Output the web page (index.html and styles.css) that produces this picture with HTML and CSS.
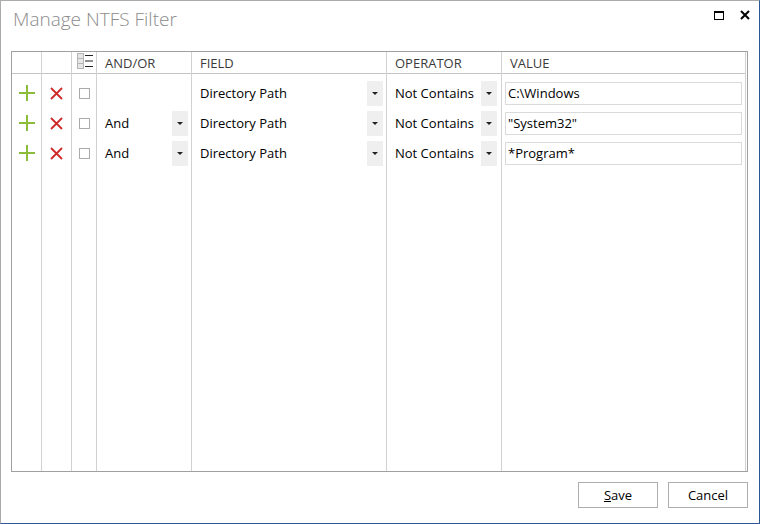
FILE: index.html
```html
<!DOCTYPE html>
<html lang="en">
<head>
	<meta charset="UTF-8">
	<title>Manage NTFS Filter</title>
	<link rel="stylesheet" href="styles.css">
</head>
<body>
	<div class="window">
		<div class="titlebar">
			<span class="title">Manage NTFS Filter</span>
			<div class="controls">
				<span class="ctl max"></span>
				<svg class="ctl" width="10" height="10" viewBox="0 0 10 10"><path d="M1 1 L9 9 M9 1 L1 9" stroke="#000" stroke-width="2"/></svg>
			</div>
		</div>

		<div class="grid">
			<!-- add -->
			<div class="col c-add">
				<div class="head"></div>
				<div class="cell"><svg width="18" height="18" viewBox="0 0 18 18"><path d="M9 1 V17 M1 9 H17" stroke="#8cbd3a" stroke-width="2"/></svg></div>
				<div class="cell"><svg width="18" height="18" viewBox="0 0 18 18"><path d="M9 1 V17 M1 9 H17" stroke="#8cbd3a" stroke-width="2"/></svg></div>
				<div class="cell"><svg width="18" height="18" viewBox="0 0 18 18"><path d="M9 1 V17 M1 9 H17" stroke="#8cbd3a" stroke-width="2"/></svg></div>
			</div>
			<!-- delete -->
			<div class="col c-del">
				<div class="head"></div>
				<div class="cell"><svg width="13" height="13" viewBox="0 0 13 13"><path d="M1 1 L12 12 M12 1 L1 12" stroke="#cf2a2a" stroke-width="1.8"/></svg></div>
				<div class="cell"><svg width="13" height="13" viewBox="0 0 13 13"><path d="M1 1 L12 12 M12 1 L1 12" stroke="#cf2a2a" stroke-width="1.8"/></svg></div>
				<div class="cell"><svg width="13" height="13" viewBox="0 0 13 13"><path d="M1 1 L12 12 M12 1 L1 12" stroke="#cf2a2a" stroke-width="1.8"/></svg></div>
			</div>
			<!-- check -->
			<div class="col c-chk">
				<div class="head">
					<svg width="17" height="17" viewBox="0 0 17 17">
						<rect x="0.5" y="0.5" width="6" height="5" fill="#e6e6e6" stroke="#b4b4b4"/>
						<rect x="0.5" y="5.5" width="6" height="5" fill="#e6e6e6" stroke="#b4b4b4"/>
						<rect x="0.5" y="10.5" width="6" height="5" fill="#e6e6e6" stroke="#b4b4b4"/>
						<path d="M8 2.5 H16 M8 8 H16 M8 13.5 H16" stroke="#222" stroke-width="1"/>
					</svg>
				</div>
				<div class="cell"><span class="box"></span></div>
				<div class="cell"><span class="box"></span></div>
				<div class="cell"><span class="box"></span></div>
			</div>
			<!-- and/or -->
			<div class="col c-andor">
				<div class="head">AND/OR</div>
				<div class="cell"></div>
				<div class="cell select"><span>And</span><span class="drop"></span></div>
				<div class="cell select"><span>And</span><span class="drop"></span></div>
			</div>
			<!-- field -->
			<div class="col c-field">
				<div class="head">FIELD</div>
				<div class="cell select"><span>Directory Path</span><span class="drop"></span></div>
				<div class="cell select"><span>Directory Path</span><span class="drop"></span></div>
				<div class="cell select"><span>Directory Path</span><span class="drop"></span></div>
			</div>
			<!-- operator -->
			<div class="col c-op">
				<div class="head">OPERATOR</div>
				<div class="cell select"><span>Not Contains</span><span class="drop"></span></div>
				<div class="cell select"><span>Not Contains</span><span class="drop"></span></div>
				<div class="cell select"><span>Not Contains</span><span class="drop"></span></div>
			</div>
			<!-- value -->
			<div class="col c-val">
				<div class="head">VALUE</div>
				<div class="cell"><div class="input">C:\Windows</div></div>
				<div class="cell"><div class="input">"System32"</div></div>
				<div class="cell"><div class="input">*Program*</div></div>
			</div>
		</div>

		<div class="footer">
			<button class="btn"><u>S</u>ave</button>
			<button class="btn">Cancel</button>
		</div>
	</div>
</body>
</html>
```

FILE: styles.css
```css
*{
	margin: 0;
	padding: 0;
	box-sizing: border-box;
}
body{
	background: #fff;
	font-family: "Open Sans", "Noto Sans", sans-serif;
	font-size: 13px;
	color: #000;
}
.window{
	width: 760px;
	height: 524px;
	border-top: 1px solid #ababab;
	border-left: 1px solid #ababab;
	border-right: 1px solid #2b5797;
	border-bottom: 1px solid #2b5797;
	display: flex;
	flex-direction: column;
	padding: 0 11px 0 10px;
}
.titlebar{
	height: 50px;
	display: flex;
	justify-content: space-between;
	padding: 5px 0 0 2px;
}
.title{
	font-size: 19px;
	color: #8c8c8c;
	font-weight: 300;
}
.controls{
	display: flex;
	gap: 16px;
	padding-top: 4px;
	margin-right: -2px;
}
.ctl{
	display: block;
}
.max{
	width: 10px;
	height: 9px;
	border: 1px solid #000;
	border-top-width: 2px;
	margin-top: 1px;
}
.grid{
	height: 421px;
	border: 1px solid #a0a0a0;
	padding-right: 1px;
	display: flex;
}
.col{
	border-right: 1px solid #d2d2d2;
	display: flex;
	flex-direction: column;
}
.c-add{ width: 30px; }
.c-del{ width: 30px; }
.c-chk{ width: 25px; }
.c-andor{ width: 95px; }
.c-field{ width: 195px; }
.c-op{ width: 115px; }
.c-val{ width: 244px; }
.head{
	height: 22px;
	border-bottom: 1px solid #c4c4c4;
	color: #3b3b3b;
	padding: 2px 0 0 8px;
	margin-bottom: 4px;
}
.c-add .head, .c-del .head{
	padding: 0;
}
.c-chk .head{
	padding: 1px 0 0 5px;
}
.cell{
	height: 30px;
	display: flex;
	align-items: center;
	justify-content: center;
}
.cell svg{
	display: block;
}
.box{
	width: 11px;
	height: 11px;
	border: 1px solid #ababab;
	margin-left: 1px;
}
.select{
	justify-content: space-between;
	padding: 0 3px 0 8px;
}
.c-op .select{
	padding-right: 4px;
}
.drop{
	width: 16px;
	height: 25px;
	background: #efefef;
	display: flex;
	align-items: center;
	justify-content: center;
}
.drop::after{
	content: "";
	border-left: 3px solid transparent;
	border-right: 3px solid transparent;
	border-top: 3px solid #222;
}
.c-val .cell{
	padding: 0 3px;
}
.input{
	width: 100%;
	height: 23px;
	border: 1px solid #dadada;
	padding: 1px 0 0 2px;
}
.footer{
	display: flex;
	justify-content: flex-end;
	gap: 10px;
	padding-top: 10px;
}
.btn{
	width: 80px;
	height: 26px;
	background: #fff;
	border: 1px solid #adadad;
	font-family: inherit;
	font-size: 13px;
	color: #000;
}
```
